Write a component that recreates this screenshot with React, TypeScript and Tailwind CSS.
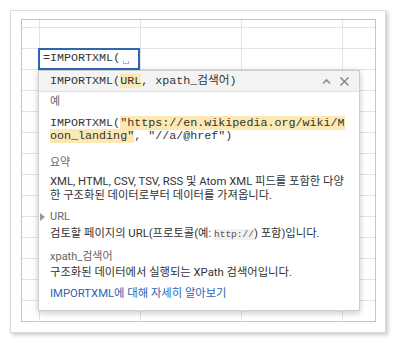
import React from "react";

const mono = { fontFamily: '"Liberation Mono", "Noto Sans CJK KR", monospace' };
const sans = { fontFamily: 'Roboto, "Noto Sans CJK KR", sans-serif' };

function GridCells() {
  const cols = 5;
  const rows = 15;
  const cells = [];
  for (let r = 0; r < rows; r++) {
    for (let c = 0; c < cols; c++) {
      const last = c === cols - 1;
      const lastRow = r === rows - 1;
      cells.push(
        <div
          key={`${r}-${c}`}
          className={`${last ? "" : "border-r"} ${lastRow ? "" : "border-b"} border-[#e3e3e3]`}
        />
      );
    }
  }
  return (
    <div className="grid h-full w-full grid-cols-[18px_101px_101px_101px_1fr] grid-rows-[8px_repeat(14,21px)]">
      {cells}
    </div>
  );
}

export default function App() {
  return (
    <div className="h-[343px] w-[397px] bg-white">
      <div className="ml-[10px] pt-[10px]">
        <div className="h-[323px] w-[376px] border border-[#dcdcdc] bg-white pl-[10px] pt-[8px] shadow-[2px_2px_4px_rgba(0,0,0,0.22)]">
          <div className="relative h-[303px] w-[355px] border border-[#c4c4c4] bg-white">
            <GridCells />
            {/* active cell */}
            <div
              className="absolute left-[16px] top-[28px] flex h-[22px] w-[102px] items-center border-2 border-[#2f66b3] bg-white pl-[3px] text-[11.7px] text-[#333]"
              style={mono}
            >
              <span>=IMPORTXML(</span>
              <span className="ml-[3px] mt-[6px] inline-block h-[3px] w-[6px] border-b border-l border-r border-[#b5b5b5]" />
            </div>
            {/* popup */}
            <div className="absolute left-[16px] top-[50px] w-[322px] border border-[#cfcfcf] bg-white shadow-[0_2px_6px_rgba(0,0,0,0.22)]">
              <div className="flex h-[21px] items-center justify-between border-b border-[#e2e2e2] bg-[#f3f3f3] pl-[11px] pr-[9px]">
                <div className="whitespace-nowrap text-[11.7px] leading-[14px] text-[#333]" style={mono}>
                  IMPORTXML(<span className="bg-[#fce8b2]">URL</span>, xpath_검색어)
                </div>
                <div className="flex items-center gap-[7px]">
                  <svg width="11" height="11" viewBox="0 0 11 11">
                    <path d="M2 7.5 L5.5 4 L9 7.5" fill="none" stroke="#8a8a8a" strokeWidth="1.6" />
                  </svg>
                  <svg width="11" height="11" viewBox="0 0 11 11">
                    <path d="M1.5 1.5 L9.5 9.5 M9.5 1.5 L1.5 9.5" fill="none" stroke="#8a8a8a" strokeWidth="1.6" />
                  </svg>
                </div>
              </div>
              <div className="relative whitespace-nowrap px-[11px] pb-[9px] pt-[2px] text-[11.3px] text-[#333]" style={sans}>
                <div className="text-[11px] leading-[16px] text-[#666]">예</div>
                <div className="mt-[7px] text-[11.7px] leading-[13px]" style={mono}>
                  <div>
                    IMPORTXML(<span className="bg-[#fce8b2]">"https://en.wikipedia.org/wiki/M</span>
                  </div>
                  <div>
                    <span className="bg-[#fce8b2]">oon_landing"</span>, "//a/@href")
                  </div>
                </div>

                <div className="mt-[12px] text-[11px] leading-[16px] text-[#666]">요약</div>
                <div className="mt-[4px] leading-[14px]">
                  <div>XML, HTML, CSV, TSV, RSS 및 Atom XML 피드를 포함한 다양</div>
                  <div>한 구조화된 데이터로부터 데이터를 가져옵니다.</div>
                </div>

                <div className="relative mt-[6px] text-[11px] leading-[16px] text-[#666]">
                  <span className="absolute left-[-10px] top-[4px] h-0 w-0 border-y-[4px] border-l-[5px] border-y-transparent border-l-[#9a9a9a]" />
                  URL
                </div>
                <div className="mt-[2px] leading-[14px]">
                  검토할 페이지의 URL(프로토콜(예:{" "}
                  <span className="bg-[#f1f1f1] text-[9.5px] text-[#555]" style={mono}>
                    http://
                  </span>
                  ) 포함)입니다.
                </div>

                <div className="mt-[7px] text-[11px] leading-[16px] text-[#666]">xpath_검색어</div>
                <div className="mt-[1px] leading-[14px]">구조화된 데이터에서 실행되는 XPath 검색어입니다.</div>

                <div className="mt-[7px] leading-[14px] text-[#2d64b3]">IMPORTXML에 대해 자세히 알아보기</div>
              </div>
            </div>
          </div>
        </div>
      </div>
    </div>
  );
}
